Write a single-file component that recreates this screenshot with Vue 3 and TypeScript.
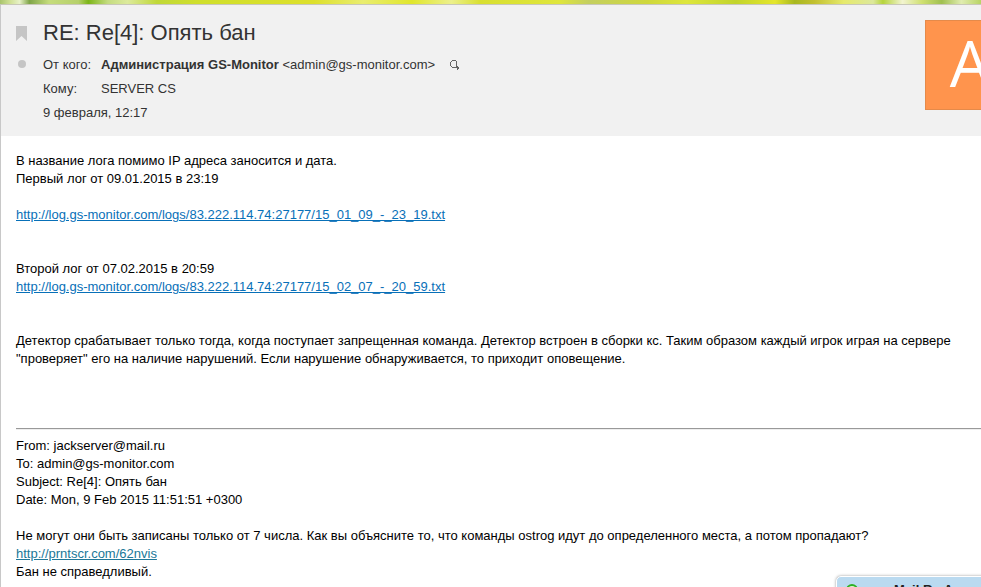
<script setup lang="ts">
interface Message {
  subject: string
  senderName: string
  senderEmail: string
  recipient: string
  date: string
}

const message: Message = {
  subject: 'RE: Re[4]: Опять бан',
  senderName: 'Администрация GS-Monitor',
  senderEmail: 'admin@gs-monitor.com',
  recipient: 'SERVER CS',
  date: '9 февраля, 12:17',
}

const firstLog = 'http://log.gs-monitor.com/logs/83.222.114.74:27177/15_01_09_-_23_19.txt'
const secondLog = 'http://log.gs-monitor.com/logs/83.222.114.74:27177/15_02_07_-_20_59.txt'
const screenshot = 'http://prntscr.com/62nvis'

const quotedHeaders: string[] = [
  'From: jackserver@mail.ru',
  'To: admin@gs-monitor.com',
  'Subject: Re[4]: Опять бан',
  'Date: Mon, 9 Feb 2015 11:51:51 +0300',
]
</script>

<template>
  <div class="page">
    <div class="theme-strip"></div>
    <main class="letter">
      <header class="head">
        <div class="marks">
          <button class="flag" type="button" aria-label="Пометить флажком">
            <svg width="11" height="15" viewBox="0 0 11 15"><path d="M0 0H11V15L5.5 10L0 15Z" fill="#c5c5c5" /></svg>
          </button>
          <button class="unread" type="button" aria-label="Пометить непрочитанным"></button>
        </div>
        <div class="info">
          <h1 class="subject">{{ message.subject }}</h1>
          <dl class="fields">
            <dt>От кого:</dt>
            <dd class="sender">
              <span><b>{{ message.senderName }}</b> &lt;{{ message.senderEmail }}&gt;</span>
              <button class="search" type="button" aria-label="Найти письма отправителя">
                <svg width="10" height="10" viewBox="0 0 10 10" fill="#666">
                  <path d="M2 0H6V1H2ZM1 1H2V2H1ZM6 1H7V2H6ZM0 2H1V6H0ZM6 2H7V6H6ZM1 6H2V7H1ZM2 7H6V8H2ZM6 6H8V7H6ZM6 7H9V8H6ZM7 8H9V9H7ZM7 9H8V10H7Z" />
                </svg>
              </button>
            </dd>
            <dt>Кому:</dt>
            <dd>{{ message.recipient }}</dd>
          </dl>
          <time class="date">{{ message.date }}</time>
        </div>
        <div class="avatar">А</div>
      </header>
      <article class="body">
        <p>В название лога помимо IP адреса заносится и дата.<br />Первый лог от 09.01.2015 в 23:19</p>
        <p><a :href="firstLog">{{ firstLog }}</a></p>
        <p class="spaced">Второй лог от 07.02.2015 в 20:59<br /><a :href="secondLog">{{ secondLog }}</a></p>
        <p class="spaced">
          Детектор срабатывает только тогда, когда поступает запрещенная команда. Детектор встроен в сборки кс. Таким образом каждый игрок играя на сервере "проверяет" его на наличие нарушений. Если нарушение обнаруживается, то приходит оповещение.
        </p>
        <hr />
        <blockquote>
          <p><template v-for="line in quotedHeaders" :key="line">{{ line }}<br /></template></p>
          <p>
            Не могут они быть записаны только от 7 числа. Как вы объясните то, что команды ostrog идут до определенного места, а потом пропадают?<br />
            <a class="visited" :href="screenshot">{{ screenshot }}</a><br />
            Бан не справедливый.
          </p>
        </blockquote>
      </article>
    </main>
    <aside class="agent">
      <svg width="12" height="12" viewBox="0 0 12 12"><circle cx="6" cy="6" r="5" fill="#dff3d0" stroke="#2eb023" stroke-width="2" /></svg>
      <span>Mail.Ru Агент</span>
    </aside>
  </div>
</template>

<style>
body {
  margin: 0;
}
</style>

<style scoped>
.page {
  position: relative;
  height: 100vh;
  overflow: hidden;
  display: flex;
  flex-direction: column;
  background: #fff;
  color: #000;
  font: 13px/18px "Liberation Sans", Arial, sans-serif;
}

.theme-strip {
  flex: none;
  height: 4px;
  background: linear-gradient(90deg, #a8c46c 0, #cfe094 1%, #e8f2c8 2%, #7fa548 3%, #c5dc7c 5%, #b6d06a 8%, #7cb518 9%, #c4dc80 11%, #dcea9c 13%, #c0d838 16%, #cfdf2c 20%, #dde02c 32%, #e9ed70 37%, #e0e62c 42%, #ecf08c 46%, #d8df30 49%, #dfe63c 57%, #c4cf60 60%, #cfd83c 66%, #dde63c 70%, #c2d42c 75%, #e4e62c 79%, #a8b820 81%, #c2c030 83%, #e6ea6c 86%, #dce89c 89%, #b6d43c 90%, #f2f4d0 92%, #cfe070 94%, #a0c050 96%, #e0ecb0 98%, #b8d464 100%);
}

.letter {
  flex: 1;
  border-top: 1px solid #c8c8b8;
  border-left: 1px solid #c8c8c8;
}

.head {
  display: flex;
  padding: 15px 0 11px 15px;
  background: #f1f1f1;
  color: #333;
}

button {
  display: block;
  padding: 0;
  border: 0;
  background: none;
}

svg {
  display: block;
}

.marks {
  display: flex;
  flex-direction: column;
  align-items: center;
  gap: 19px;
  width: 11px;
  padding-top: 6px;
  margin-right: 16px;
}

.unread {
  width: 8px;
  height: 8px;
  border-radius: 50%;
  background: #c5c5c5;
}

.info {
  flex: 1;
  min-width: 0;
  padding-top: 1px;
}

.subject {
  margin: 0 0 8px;
  font-size: 22px;
  font-weight: 400;
  line-height: 24px;
}

.fields {
  display: grid;
  grid-template-columns: 58px 1fr;
  margin: 0;
  line-height: 24px;
}

dd {
  margin: 0;
}

.sender {
  display: flex;
  align-items: center;
  gap: 15px;
}

.date {
  display: block;
  line-height: 24px;
}

.avatar {
  box-sizing: border-box;
  flex: none;
  width: 90px;
  height: 90px;
  margin-right: -34px;
  border: 1px solid #e58a4a;
  background: #ff944d;
  color: #fff;
  font: 64px/84px "Open Sans", sans-serif;
  text-align: center;
}

.body {
  padding: 16px 0 0 15px;
}

p {
  margin: 0 0 18px;
}

.spaced {
  margin-top: 36px;
}

a {
  color: #0870b8;
}

.visited {
  color: #207898;
}

hr {
  height: 0;
  margin: 60px 0 7px;
  border: 0;
  border-top: 1px solid #999;
  border-bottom: 1px solid #eee;
}

blockquote {
  margin: 0;
}

.agent {
  position: absolute;
  top: calc(100% - 11px);
  right: -40px;
  box-sizing: border-box;
  display: flex;
  align-items: center;
  gap: 36px;
  width: 185px;
  height: 28px;
  padding: 4px 9px;
  border: 1px solid #fff;
  border-radius: 5px 0 0 0;
  background: #badaf0;
  box-shadow: 0 0 3px #999;
  color: #222;
  font-weight: 700;
}
</style>
